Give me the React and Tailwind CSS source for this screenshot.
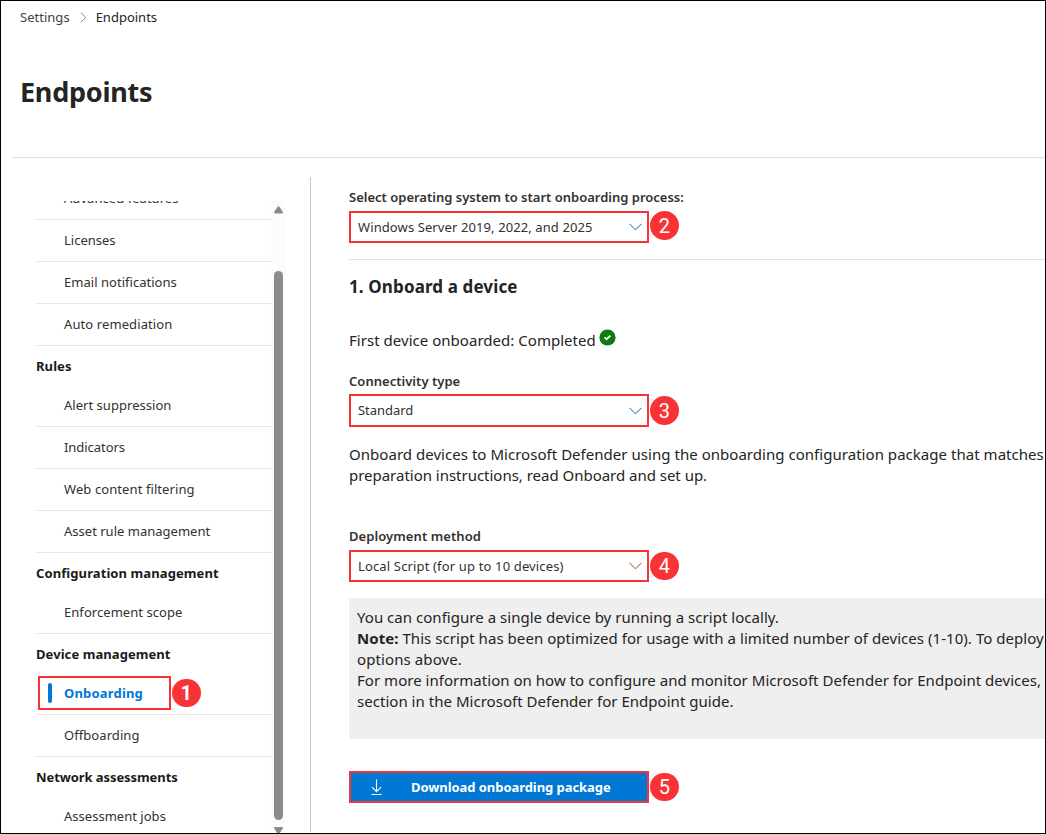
import React from "react";

function Badge({ n, className = "" }) {
  return (
    <span className={`flex h-[28.5px] w-[28.5px] shrink-0 items-center justify-center rounded-full bg-[#f93236] font-['Roboto',sans-serif] text-[20px] leading-none text-white ${className}`}>
      {n}
    </span>
  );
}

function NavItem({ label, tracking = "tracking-[0.05px]" }) {
  return (
    <li className={`flex h-[42px] shrink-0 items-center border-b border-[#e6e6e6] pl-7 text-[13px] text-[#323130] ${tracking}`}>
      {label}
    </li>
  );
}

function NavHeading({ label, tracking = "tracking-[0.09px]" }) {
  return (
    <li className={`flex h-[39px] shrink-0 items-center pt-[2px] text-[13px] font-bold text-[#1b1a19] ${tracking}`}>
      {label}
    </li>
  );
}

function Sidebar() {
  return (
    <nav className="mt-[43px] ml-[35px] flex h-[631px] w-[250px] shrink-0">
      <div className="h-full w-[235px] overflow-hidden">
        <ul className="-mt-[23px] flex flex-col">
          <NavItem label="Advanced features" />
          <NavItem label="Licenses" tracking="tracking-normal" />
          <NavItem label="Email notifications" tracking="tracking-[0.03px]" />
          <NavItem label="Auto remediation" tracking="tracking-[0.1px]" />
          <NavHeading label="Rules" />
          <NavItem label="Alert suppression" tracking="tracking-[0.03px]" />
          <NavItem label="Indicators" tracking="tracking-[-0.05px]" />
          <NavItem label="Web content filtering" tracking="tracking-[0.09px]" />
          <NavItem label="Asset rule management" tracking="tracking-[0.01px]" />
          <NavHeading label="Configuration management" />
          <NavItem label="Enforcement scope" />
          <NavHeading label="Device management" tracking="tracking-[0.07px]" />
          <li className="relative flex h-[42px] shrink-0 items-center border-b border-[#e6e6e6] pl-7 text-[13px] font-bold tracking-[0.18px] text-[#0078d4]">
            Onboarding
            <span className="absolute top-[10px] left-3 h-5 w-1 rounded-sm bg-[#0078d4]" />
            <span className="absolute top-[3px] left-[2px] flex items-center">
              <span className="mr-px h-[34px] w-[133px] border-2 border-[#f93236]" />
              <Badge n={1} />
            </span>
          </li>
          <NavItem label="Offboarding" tracking="tracking-[0.07px]" />
          <NavHeading label="Network assessments" tracking="tracking-[-0.08px]" />
          <NavItem label="Assessment jobs" tracking="tracking-[0.02px]" />
        </ul>
      </div>
      <div className="flex w-[15px] flex-col items-center bg-[#fcfcfc] pt-[5px]">
        <svg className="h-[8px] w-[9px] shrink-0" viewBox="0 0 9 8" fill="#8b8b8b">
          <path d="M3.6 .8Q4.5 -.2 5.4 .8L8.7 5.8Q9.3 7.5 8 7.5H1Q-.3 7.5 .3 5.8Z" />
        </svg>
        <div className="mt-[57px] h-[549px] w-[9px] shrink-0 rounded-full bg-[#8b8b8b]" />
        <svg className="mt-[7px] h-[6px] w-[9px] shrink-0" viewBox="0 0 9 6" fill="#8b8b8b">
          <path d="M1 0H8Q9.3 0 8.7 1.7L5.8 6H3.2L.3 1.7Q-.3 0 1 0Z" />
        </svg>
      </div>
    </nav>
  );
}

function Dropdown({ value, n, tracking, tall = false, chevron = "#5b8fb5", badgeClass = "" }) {
  return (
    <div className="flex items-center">
      <div className={`mr-px flex w-[300px] shrink-0 items-center justify-between border-2 border-[#f93236] pr-[5px] pl-[7px] text-[13px] text-[#323130] ${tall ? "h-[33px]" : "h-8"} ${tracking}`}>
        <span className="pt-px">{value}</span>
        <svg width="13" height="8" viewBox="0 0 13 8" fill="none" stroke={chevron} strokeWidth="1.1">
          <path d="M.6 .9L6.5 6.8L12.4 .9" />
        </svg>
      </div>
      <Badge n={n} className={badgeClass} />
    </div>
  );
}

function Label({ children, className = "" }) {
  return <div className={`h-[18px] text-[13px] leading-[18px] font-semibold text-[#323130] ${className}`}>{children}</div>;
}

function Content() {
  return (
    <main className="mt-[19px] ml-[24px] flex h-[655px] grow flex-col overflow-hidden border-l border-[#c8c8c8] pl-[38px] whitespace-nowrap text-[#242424]">
      <Label className="mt-[11px]">Select operating system to start onboarding process:</Label>
      <div className="mt-[5px]">
        <Dropdown value="Windows Server 2019, 2022, and 2025" n={2} tracking="tracking-[0.1px]" badgeClass="-mt-[3px]" />
      </div>
      <div className="mt-4 h-px shrink-0 bg-[#e1e1e1]" />
      <h2 className="mt-[15px] h-6 text-[17px] leading-6 font-bold tracking-[0.12px]">1. Onboard a device</h2>
      <div className="mt-[31px] flex h-[21px] text-[15px] leading-[21px] tracking-[0.03px]">
        First device onboarded: Completed
        <svg className="-mt-px ml-[3px]" width="17" height="17" viewBox="0 0 17 17">
          <circle cx="8.5" cy="8.5" r="8.1" fill="#107c10" />
          <path d="M5.6 8.3L7.6 10.2L11.4 6.6" fill="none" stroke="#fff" strokeWidth="1.8" />
        </svg>
      </div>
      <Label className="mt-[21px] tracking-[0.03px]">Connectivity type</Label>
      <div className="mt-[4px]">
        <Dropdown value="Standard" n={3} tall tracking="tracking-[-0.05px]" />
      </div>
      <div className="mt-[17px] h-[42px] text-[15px] leading-[21px]">
        <p className="tracking-[0.035px]">Onboard devices to Microsoft Defender using the onboarding configuration package that matches</p>
        <p className="tracking-[-0.02px]">preparation instructions, read Onboard and set up.</p>
      </div>
      <Label className="mt-[41px] tracking-[0.08px]">Deployment method</Label>
      <div className="mt-[5px]">
        <Dropdown value="Local Script (for up to 10 devices)" n={4} tracking="tracking-[0.15px]" chevron="#b5805e" />
      </div>
      <div className="mt-4 h-[141px] shrink-0 overflow-hidden bg-[#efefef] pt-[9px] pl-[8px] text-[15px] leading-[21px]">
        <p className="tracking-[0.03px]">You can configure a single device by running a script locally.</p>
        <p className="tracking-[0.05px]">
          <b>Note:</b> This script has been optimized for usage with a limited number of devices (1-10). To deploy
        </p>
        <p className="tracking-[0.1px]">options above.</p>
        <p className="tracking-[0.03px]">For more information on how to configure and monitor Microsoft Defender for Endpoint devices,</p>
        <p className="tracking-[0.03px]">section in the Microsoft Defender for Endpoint guide.</p>
      </div>
      <div className="mt-8 flex items-center">
        <button className="mr-px flex h-8 w-[300px] shrink-0 items-center border-2 border-[#f93236] bg-[#0078d4] text-[13px] font-bold tracking-[-0.06px] text-white">
          <svg className="ml-[20px] shrink-0" width="11" height="17" viewBox="0 0 11 17" fill="none" stroke="#fff" strokeWidth="1.1">
            <path d="M5.5 .5V12.5M1 8.2L5.5 12.7L10 8.2M.5 15.5H10.5" />
          </svg>
          <span className="ml-[29px] pt-px">Download onboarding package</span>
        </button>
        <Badge n={5} />
      </div>
    </main>
  );
}

export default function App() {
  return (
    <div className="flex h-[834px] w-[1046px] flex-col overflow-hidden border border-black bg-white font-['Noto_Sans','Open_Sans',sans-serif]">
      <div className="mt-[7px] ml-[19px] flex h-[18px] items-center text-[13px] leading-[18px] text-[#424242]">
        <span className="tracking-[0.02px]">Settings</span>
        <svg className="mr-[9px] ml-[10px]" width="7" height="11" viewBox="0 0 7 11" fill="none" stroke="#8a8886" strokeWidth="1">
          <path d="M.8 .6L5.8 5.5L.8 10.4" />
        </svg>
        <span className="text-[#242424]">Endpoints</span>
      </div>
      <h1 className="mt-[48px] ml-[19px] h-9 text-[27px] leading-9 font-bold tracking-[-0.25px] text-[#242424]">Endpoints</h1>
      <div className="mt-[47px] ml-[11px] h-px shrink-0 bg-[#e0e0e0]" />
      <div className="flex">
        <Sidebar />
        <Content />
      </div>
    </div>
  );
}
